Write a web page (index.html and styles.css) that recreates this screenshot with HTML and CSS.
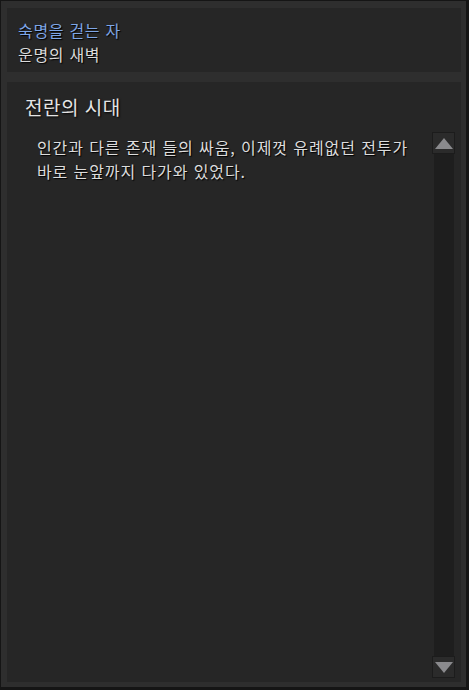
FILE: index.html
```
<!DOCTYPE html>
<html lang="ko">
<head>
<meta charset="utf-8">
<link rel="stylesheet" href="styles.css">
</head>
<body>
<div class="frame">
  <div class="panel header">
    <div class="quest">숙명을 걷는 자</div>
    <div class="chapter">운명의 새벽</div>
  </div>
  <div class="panel content">
    <div class="title">전란의 시대</div>
    <div class="body">
      <p class="text">인간과 다른 존재 들의 싸움, 이제껏 유례없던 전투가 바로 눈앞까지 다가와 있었다.</p>
      <div class="scrollbar">
        <div class="btn"><svg width="18" height="11" viewBox="0 0 18 11"><polygon points="9,0 18,11 0,11" fill="#8a8a8d"/></svg></div>
        <div class="track"></div>
        <div class="btn"><svg width="18" height="11" viewBox="0 0 18 11"><polygon points="0,0 18,0 9,11" fill="#8a8a8d"/></svg></div>
      </div>
    </div>
  </div>
</div>
</body>
</html>
```
FILE: styles.css
```
html, body {
  margin: 0;
  padding: 0;
  background: #151515;
  width: 469px;
  height: 690px;
  overflow: hidden;
}
.frame {
  margin: 1px 0 0 1px;
  width: 465px;
  height: 686px;
  box-sizing: border-box;
  padding: 7px 5px 5px 6px;
  background: #2e2e2e;
  display: flex;
  flex-direction: column;
  gap: 10px;
  font-family: "Noto Sans CJK KR", "Noto Sans", sans-serif;
}
.panel {
  background: #262626;
}
.header {
  height: 64px;
  box-sizing: border-box;
  padding: 10px 0 0 11px;
  font-size: 16px;
  line-height: 24px;
  letter-spacing: 0.7px;
  text-shadow: 1px 1px 1px #000;
}
.quest {
  color: #7ea6e6;
}
.chapter {
  color: #dadada;
}
.content {
  flex: 1;
  display: flex;
  flex-direction: column;
  padding: 11px 6px 4px 18px;
}
.title {
  font-size: 19px;
  line-height: 27px;
  letter-spacing: 0.5px;
  color: #e4e4e4;
  text-shadow: 1px 1px 2px #000;
}
.body {
  flex: 1;
  display: flex;
  gap: 10px;
  margin-top: 12px;
}
.text {
  flex: 1;
  margin: 0;
  padding: 3px 0 0 12px;
  font-size: 16px;
  line-height: 24px;
  letter-spacing: 0.9px;
  word-break: keep-all;
  color: #dcdcdc;
  text-shadow: 1px 1px 1px #000;
}
.scrollbar {
  width: 23px;
  display: flex;
  flex-direction: column;
  align-items: center;
}
.btn {
  width: 23px;
  height: 22px;
  box-sizing: border-box;
  border: 1px solid #1c1c1c;
  background: #2b2b2b;
  display: flex;
  align-items: center;
  justify-content: center;
}
.track {
  flex: 1;
  width: 20px;
  background: #1e1e1e;
}
```
